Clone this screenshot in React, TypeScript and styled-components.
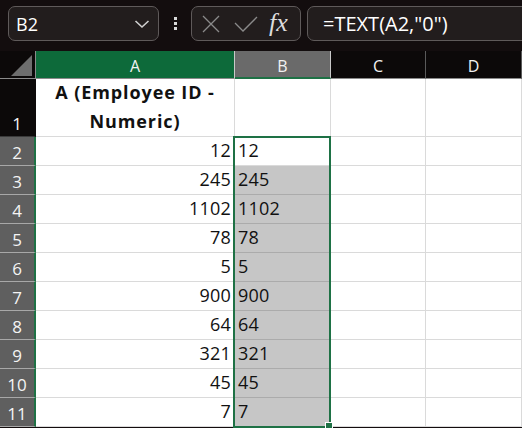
import React from "react"
import styled, { createGlobalStyle } from "styled-components"

const Global = createGlobalStyle`
    html, body {
        margin: 0;
        padding: 0;
        background: #130d0e;
        overflow: hidden;
    }
`

const Page = styled.div`
    width: 522px;
    height: 428px;
    overflow: hidden;
    background: #130d0e;
    font-family: "Open Sans", "Noto Sans", sans-serif;
`

const Toolbar = styled.div`
    height: 51px;
    box-sizing: border-box;
    padding: 6px 0 0 8px;
    display: flex;
    align-items: flex-start;
    overflow: hidden;
`

const Box = styled.div<{ $w: number }>`
    width: ${(p) => p.$w}px;
    height: 35px;
    box-sizing: border-box;
    border: 1px solid #5f5a5a;
    border-radius: 7px;
    background: #221d1d;
    display: flex;
    align-items: center;
    flex-shrink: 0;
`

const NameText = styled.span`
    color: #ffffff;
    font-size: 18px;
    margin-left: 7px;
    flex: 1;
`

const Dots = styled.div`
    width: 32px;
    height: 35px;
    flex-shrink: 0;
    display: flex;
    flex-direction: column;
    align-items: center;
    justify-content: center;
    gap: 2px;
    span {
        width: 3px;
        height: 3px;
        background: #d8d8d8;
    }
`

const Fx = styled.span`
    margin-left: 11px;
    color: #dcdcdc;
    font-family: "Liberation Serif", "DejaVu Serif", serif;
    font-style: italic;
    font-size: 26px;
    line-height: 1;
    margin-top: -2px;
`

const Spacer = styled.div`
    width: 6px;
    flex-shrink: 0;
`

const FormulaText = styled.span`
    color: #ffffff;
    font-size: 20px;
    margin-left: 15px;
    white-space: nowrap;
`

const Sheet = styled.div`
    position: relative;
    display: grid;
    grid-template-columns: 36px 199px 96px 95px 96px;
    grid-template-rows: 28px 58px repeat(10, 29px);
`

const Corner = styled.div`
    background: #0c0909;
    border-right: 1px solid #8a8a8a;
    border-bottom: 1px solid #8a8a8a;
    position: relative;
    svg {
        position: absolute;
        left: 11px;
        top: 4px;
    }
`

const ColHead = styled.div<{ $kind: "sel" | "part" | "none" }>`
    box-sizing: border-box;
    background: ${(p) => (p.$kind === "sel" ? "#0d6a3a" : p.$kind === "part" ? "#6a6a6a" : "#0c0909")};
    border-right: 1px solid ${(p) => (p.$kind === "none" ? "#5a5a5a" : "#c9c9c9")};
    border-bottom: ${(p) => (p.$kind === "part" ? "2px solid #1e7145" : "1px solid #8a8a8a")};
    color: #f2f2f2;
    font-size: 16px;
    display: flex;
    align-items: center;
    justify-content: center;
    padding-top: 3px;
`

const RowHead = styled.div<{ $sel?: boolean }>`
    box-sizing: border-box;
    background: ${(p) => (p.$sel ? "#5f5f5f" : "#0c0909")};
    border-right: 2px solid ${(p) => (p.$sel ? "#1e7145" : "#0c0909")};
    border-bottom: 1px solid ${(p) => (p.$sel ? "#a8a8a8" : "#3a3a3a")};
    color: #f4f4f4;
    font-size: 17px;
    display: flex;
    align-items: flex-end;
    justify-content: center;
    padding-bottom: 1px;
`

const Cell = styled.div<{ $align?: "left" | "right" | "center"; $fill?: boolean; $bold?: boolean }>`
    box-sizing: border-box;
    background: ${(p) => (p.$fill ? "#c6c6c6" : "#ffffff")};
    border-right: 1px solid ${(p) => (p.$fill ? "#ababab" : "#dadada")};
    border-bottom: 1px solid ${(p) => (p.$fill ? "#ababab" : "#dadada")};
    color: #111111;
    font-size: ${(p) => (p.$bold ? "18px" : "18px")};
    font-weight: ${(p) => (p.$bold ? 700 : 400)};
    letter-spacing: ${(p) => (p.$bold ? "0.9px" : "0.2px")};
    display: flex;
    align-items: flex-end;
    justify-content: ${(p) => (p.$align === "right" ? "flex-end" : p.$align === "center" ? "center" : "flex-start")};
    text-align: ${(p) => p.$align ?? "left"};
    padding: 0 3px 0 3px;
    line-height: 29px;
`

const Selection = styled.div`
    position: absolute;
    left: 233px;
    top: 85px;
    width: 98px;
    height: 292px;
    box-sizing: border-box;
    border: 2px solid #1e7145;
    pointer-events: none;
`

const Handle = styled.div`
    position: absolute;
    right: -4px;
    bottom: -4px;
    width: 6px;
    height: 6px;
    background: #1e7145;
    border: 1px solid #ffffff;
`

const values = [12, 245, 1102, 78, 5, 900, 64, 321, 45, 7]

export default function App() {
    return (
        <Page>
            <Global />
            <Toolbar>
                <Box $w={151}>
                    <NameText>B2</NameText>
                    <svg width="16" height="10" viewBox="0 0 16 10" style={{ marginRight: 8 }}>
                        <path d="M1.5 2 L8 8 L14.5 2" fill="none" stroke="#d0d0d0" strokeWidth="1.6" />
                    </svg>
                </Box>
                <Dots>
                    <span />
                    <span />
                    <span />
                </Dots>
                <Box $w={110}>
                    <svg width="20" height="20" viewBox="0 0 20 20" style={{ marginLeft: 9 }}>
                        <path d="M2 2 L18 18 M18 2 L2 18" stroke="#8a8a8a" strokeWidth="1.3" fill="none" />
                    </svg>
                    <svg width="24" height="18" viewBox="0 0 24 18" style={{ marginLeft: 13 }}>
                        <path d="M1 8 L9 16 L23 2" stroke="#8a8a8a" strokeWidth="1.3" fill="none" />
                    </svg>
                    <Fx>fx</Fx>
                </Box>
                <Spacer />
                <Box $w={240}>
                    <FormulaText>=TEXT(A2,"0")</FormulaText>
                </Box>
            </Toolbar>
            <Sheet>
                <Corner>
                    <svg width="22" height="22" viewBox="0 0 22 22">
                        <polygon points="21,0 21,21 0,21" fill="#6e6e6e" />
                    </svg>
                </Corner>
                <ColHead $kind="sel">A</ColHead>
                <ColHead $kind="part">B</ColHead>
                <ColHead $kind="none">C</ColHead>
                <ColHead $kind="none">D</ColHead>

                <RowHead>1</RowHead>
                <Cell $align="center" $bold>
                    A (Employee ID -<br />
                    Numeric)
                </Cell>
                <Cell />
                <Cell />
                <Cell />

                {values.map((v, i) => (
                    <React.Fragment key={i}>
                        <RowHead $sel>{i + 2}</RowHead>
                        <Cell $align="right">{v}</Cell>
                        <Cell $fill={i > 0}>{v}</Cell>
                        <Cell />
                        <Cell />
                    </React.Fragment>
                ))}
                <Selection>
                    <Handle />
                </Selection>
            </Sheet>
        </Page>
    )
}
